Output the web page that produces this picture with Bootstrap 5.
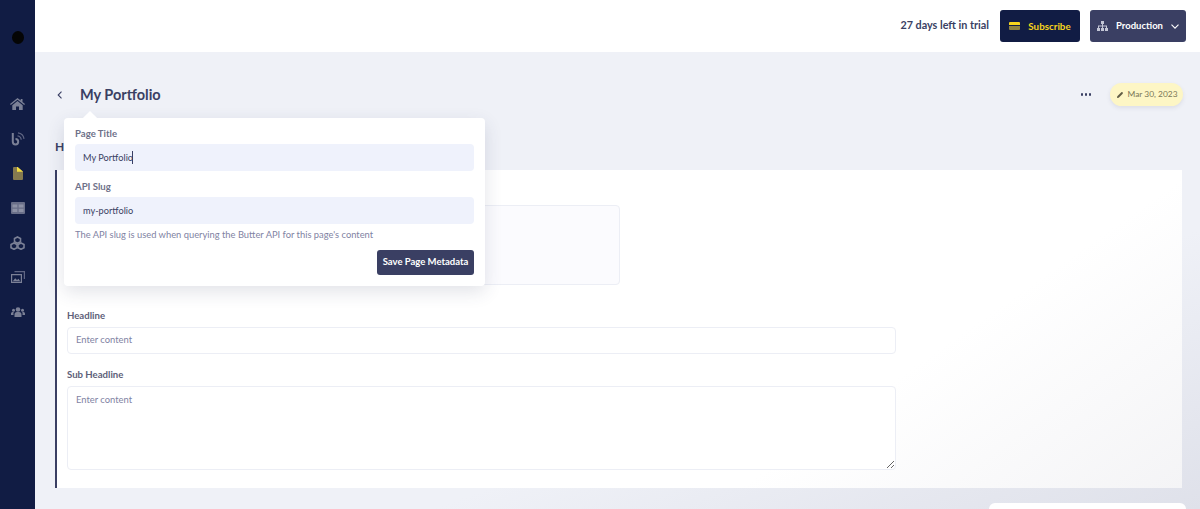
<!DOCTYPE html>
<html lang="en">
<head>
  <meta charset="UTF-8">
  <meta name="viewport" content="width=device-width, initial-scale=1.0">
  <title>My Portfolio</title>
  <link href="https://cdn.jsdelivr.net/npm/bootstrap@5.3.2/dist/css/bootstrap.min.css" rel="stylesheet">
  <style>
    html, body {
      height: 509px;
      overflow: hidden;
    }
    body {
      font-family: "Lato", "Liberation Sans", sans-serif;
      background: #fff;
      color: #3a3f63;
    }
    .app-shell {
      height: 509px;
    }
    .side-rail {
      width: 35px;
      background: #111c44;
      padding-top: 31px;
    }
    .rail-avatar {
      width: 12px;
      height: 13px;
      border-radius: 50%;
      background: #050505;
      margin-bottom: 42.6px;
    }
    .rail-icon {
      height: 34.7px;
    }
    .main-col {
      position: relative;
      min-width: 0;
      background: linear-gradient(160deg, #eff1f7 70%, #dfe1ea 100%);
    }
    .top-strip {
      height: 52px;
      background: #fff;
      padding-right: 14px;
    }
    .trial-text {
      font-size: 10.8px;
      font-weight: 700;
      color: #3a3f63;
      margin-right: 11px;
      padding-bottom: 1px;
    }
    .btn-subscribe, .btn-env {
      height: 32px;
      border-radius: 3px;
      font-weight: 700;
      padding: 0;
      border: 0;
    }
    .btn-subscribe {
      width: 80px;
      margin-right: 10px;
      font-size: 9.8px;
      background: #111c44;
      color: #f7d51d;
    }
    .btn-env {
      width: 96px;
      font-size: 9.5px;
      background: #3a3f63;
      color: #fff;
    }
    .btn-subscribe:hover { background: #111c44; color: #f7d51d; }
    .btn-env:hover { background: #3a3f63; color: #fff; }
    .page-body {
      padding: 0 18px 0 20px;
    }
    .title-row {
      height: 84px;
      padding-top: 1px;
    }
    .back-arrow {
      width: 25px;
      padding-left: 2px;
    }
    .page-name {
      font-size: 14.5px;
      font-weight: 700;
      margin: 0;
      color: #3a3f63;
    }
    .more-dots {
      gap: 1.5px;
      margin-right: 19px;
    }
    .more-dots i {
      width: 2.500px;
      height: 2.500px;
      border-radius: 50%;
      background: #3a3f63;
      display: block;
    }
    .date-pill {
      height: 23px;
      width: 73px;
      margin-right: -1px;
      padding-left: 2px;
      border-radius: 12px;
      background: #fdf6c5;
      font-size: 8.4px;
      color: #7a7657;
      gap: 4px;
      box-shadow: 0 2px 4px rgba(60, 60, 90, .1);
    }
    .section-name {
      font-size: 12px;
      font-weight: 700;
      height: 20px;
      margin: 1px 0 13px 0;
      line-height: 20px;
      color: #3a3f63;
    }
    .content-panel {
      height: 318px;
      border-left: 2px solid #3a3f63;
      padding: 35px 0 0 10px;
      background: linear-gradient(145deg, #fff 72%, #f4f4f6 100%);
    }
    .media-box {
      width: 553px;
      height: 80px;
      background: #fbfbfe;
      border: 1px solid #eceef5;
      border-radius: 4px;
      margin-bottom: 25px;
    }
    .field-label {
      font-size: 9.6px;
      font-weight: 700;
      color: #5d6079;
      margin: 0 0 5px;
      line-height: 12px;
      display: block;
    }
    .field-input {
      width: 829px;
      height: 27px;
      font-size: 9.4px;
      color: #3a3f63;
      border: 1px solid #eceef5;
      border-radius: 4px;
      padding: 0 8px 2px;
      margin-bottom: 15px;
      background: #fff;
    }
    .field-input::placeholder, .field-area::placeholder {
      color: #7f83a3;
      opacity: 1;
    }
    .field-area {
      height: 84px;
      padding: 6px 8px;
      resize: vertical;
      margin-bottom: 0;
    }
    .meta-popover {
      position: absolute;
      left: 29px;
      top: 118px;
      width: 421px;
      height: 168px;
      background: #fff;
      border-radius: 4px;
      box-shadow: 0 6px 18px rgba(50, 55, 90, .14);
      padding: 10px 11px;
    }
    .meta-popover::before {
      content: "";
      position: absolute;
      left: 21px;
      top: -5px;
      width: 10px;
      height: 10px;
      background: #fff;
      transform: rotate(45deg);
    }
    .pop-label {
      font-size: 9.6px;
      font-weight: 700;
      color: #6e7189;
      line-height: 12px;
      margin: 0 0 4px;
      display: block;
      position: relative;
    }
    .pop-field {
      position: relative;
    }
    .pop-input {
      height: 27px;
      background: #eff2fc;
      border: 0;
      border-radius: 4px;
      font-size: 9.2px;
      color: #3a3f63;
      padding: 0 8px 1px;
      margin-bottom: 10px;
    }
    .pop-input:focus {
      background: #eff2fc;
      box-shadow: none;
    }
    .fake-caret {
      position: absolute;
      left: 57px;
      top: 7px;
      width: 1px;
      height: 13px;
      background: #3a3f63;
    }
    .pop-hint {
      font-size: 9.35px;
      color: #7f83a3;
      margin: -5px 0 9px;
      line-height: 12px;
    }
    .btn-save {
      width: 97px;
      height: 25px;
      padding: 0;
      background: #3a3f63;
      color: #fff;
      font-size: 9.5px;
      font-weight: 700;
      border: 0;
      border-radius: 3px;
    }
    .btn-save:hover { background: #3a3f63; color: #fff; }
    .chat-stub {
      position: absolute;
      left: 954px;
      top: 503px;
      width: 197px;
      height: 20px;
      background: #fff;
      border-radius: 6px;
    }
  </style>
</head>
<body>

  <div class="app-shell d-flex">
    <nav class="side-rail d-flex flex-column align-items-center flex-shrink-0">
      <div class="rail-avatar"></div>
      <div class="rail-icon d-flex justify-content-center align-items-center">
        <svg width="15" height="12" viewBox="0 0 15 12"><path fill="#7b8096" d="M7.500 0 0 6l.8 1L7.500 1.800 14.200 7l.8-1-2.500-2V1h-1.800v1.500zM2.300 7.200V12h3.700V8.500h3V12h3.700V7.200L7.500 3z"/></svg>
      </div>
      <div class="rail-icon d-flex justify-content-center align-items-center">
        <svg width="14" height="15" viewBox="0 0 14 15"><path fill="none" stroke="#7b8096" stroke-width="2" d="M1.800 2v8.800a2.700 2.700 0 1 0 2.700-2.700"/><path fill="none" stroke="#5f6583" stroke-width="1.200" d="M6.500 4.800a4.300 4.300 0 0 1 3.700 4M7 1.800a7 7 0 0 1 6 6"/></svg>
      </div>
      <div class="rail-icon d-flex justify-content-center align-items-center">
        <svg width="10" height="13" viewBox="0 0 10 13"><path fill="#857a4f" d="M0 1a1 1 0 0 1 1-1h3.500L10 4.500V12a1 1 0 0 1-1 1H1a1 1 0 0 1-1-1z"/><path fill="#f3dd42" d="M4 0h.700L10 4.700H4z"/></svg>
      </div>
      <div class="rail-icon d-flex justify-content-center align-items-center">
        <svg width="14" height="12" viewBox="0 0 14 12"><rect width="14" height="12" rx="1" fill="#6a6f89"/><path fill="#8d91a5" d="M1.500 2.500h4.800v3H1.500zM7.700 2.500h4.800v3H7.700zM1.500 6.800h4.800v3.200H1.500zM7.700 6.800h4.800v3.200H7.700z"/></svg>
      </div>
      <div class="rail-icon d-flex justify-content-center align-items-center">
        <svg width="15" height="14" viewBox="0 0 15 14"><g fill="none" stroke="#7b8096" stroke-width="1.600"><path d="M7.500 1l3 1.500v3.300l-3 1.500-3-1.500V2.500z"/><path d="M4 7l3 1.500v3.300l-3 1.500-3-1.500V8.500z"/><path d="M11 7l3 1.500v3.300l-3 1.500-3-1.500V8.500z"/></g></svg>
      </div>
      <div class="rail-icon d-flex justify-content-center align-items-center">
        <svg width="14" height="12" viewBox="0 0 14 12"><path fill="#5f6583" d="M3.500 0H14v8h-1.200V1.200H3.500z"/><path fill="#7b8096" fill-rule="evenodd" d="M0 3h11v9H0zm1.200 1.200v6.600h8.600V4.200z"/><path fill="#7b8096" d="M1.800 10.200l2.400-3 1.800 1.800 1.500-1.300 1.700 2.500z"/></svg>
      </div>
      <div class="rail-icon d-flex justify-content-center align-items-center">
        <svg width="14" height="10" viewBox="0 0 14 10"><g fill="#7b8096"><circle cx="7" cy="2.500" r="2.300"/><circle cx="2.500" cy="3.200" r="1.500"/><circle cx="11.500" cy="3.200" r="1.500"/><path d="M3.500 10V7.500A2.500 2.500 0 0 1 6 5h2a2.500 2.500 0 0 1 2.500 2.500V10zM0 8V6.500A1.500 1.500 0 0 1 1.500 5h1.300A3.500 3.500 0 0 0 2.500 7.500V8zM14 8V6.500A1.500 1.500 0 0 0 12.500 5h-1.300a3.500 3.500 0 0 1 .3 2.500V8z"/></g></svg>
      </div>
    </nav>

    <div class="main-col flex-grow-1">
      <header class="top-strip d-flex align-items-center justify-content-end">
        <span class="trial-text">27 days left in trial</span>
        <button class="btn btn-subscribe d-flex align-items-center justify-content-center">
          <svg width="11" height="8" viewBox="0 0 11 8"><path fill="#f7d51d" d="M1 0h9a1 1 0 0 1 1 1v2H0V1a1 1 0 0 1 1-1z"/><path fill="#8f8340" d="M0 4h11v3a1 1 0 0 1-1 1H1a1 1 0 0 1-1-1z"/></svg>
          <span class="ms-1 ps-1">Subscribe</span>
        </button>
        <button class="btn btn-env d-flex align-items-center justify-content-center gap-2">
          <svg width="11" height="10" viewBox="0 0 11 10"><path fill="#c3c6d6" d="M4 0h3v3H6v1.500h4V7H9V5.500H6V7H5V5.500H2V7H1V4.500h4V3H4zM0 7h3v3H0zM4 7h3v3H4zM8 7h3v3H8z"/></svg>
          <span>Production</span>
          <svg width="8" height="5" viewBox="0 0 8 5"><path fill="none" stroke="#fff" stroke-width="1.100" d="M.5.700 4 4.200 7.500.700"/></svg>
        </button>
      </header>

      <div class="page-body">
        <div class="title-row d-flex align-items-center">
          <div class="back-arrow d-flex">
            <svg width="6" height="8" viewBox="0 0 6 8"><path fill="none" stroke="#3a3f63" stroke-width="1.100" d="M4.500.700 1.200 4l3.300 3.300"/></svg>
          </div>
          <h1 class="page-name">My Portfolio</h1>
          <div class="more-dots d-flex ms-auto"><i></i><i></i><i></i></div>
          <div class="date-pill d-flex align-items-center justify-content-center">
            <svg width="6" height="6" viewBox="0 0 7 7"><path fill="#5f5c45" d="M0 7l.4-2L5 .4a1 1 0 0 1 1.400 0l.2.200a1 1 0 0 1 0 1.400L2 6.600z"/></svg>
            <span>Mar 30, 2023</span>
          </div>
        </div>

        <div class="section-name">Hero</div>

        <section class="content-panel">
          <div class="media-box"></div>
          <label class="field-label" for="headlineInput">Headline</label>
          <input id="headlineInput" type="text" class="form-control field-input" placeholder="Enter content">
          <label class="field-label" for="subInput">Sub Headline</label>
          <textarea id="subInput" class="form-control field-input field-area" placeholder="Enter content"></textarea>
        </section>
      </div>

      <div class="meta-popover">
        <label class="pop-label" for="titleInput">Page Title</label>
        <div class="pop-field">
          <input id="titleInput" type="text" class="form-control pop-input" value="My Portfolio">
          <span class="fake-caret"></span>
        </div>
        <label class="pop-label" for="slugInput">API Slug</label>
        <input id="slugInput" type="text" class="form-control pop-input" value="my-portfolio">
        <p class="pop-hint">The API slug is used when querying the Butter API for this page's content</p>
        <div class="d-flex justify-content-end">
          <button class="btn btn-save">Save Page Metadata</button>
        </div>
      </div>

      <div class="chat-stub"></div>
    </div>
  </div>

  <script src="https://cdn.jsdelivr.net/npm/bootstrap@5.3.2/dist/js/bootstrap.bundle.min.js"></script>
</body>
</html>
